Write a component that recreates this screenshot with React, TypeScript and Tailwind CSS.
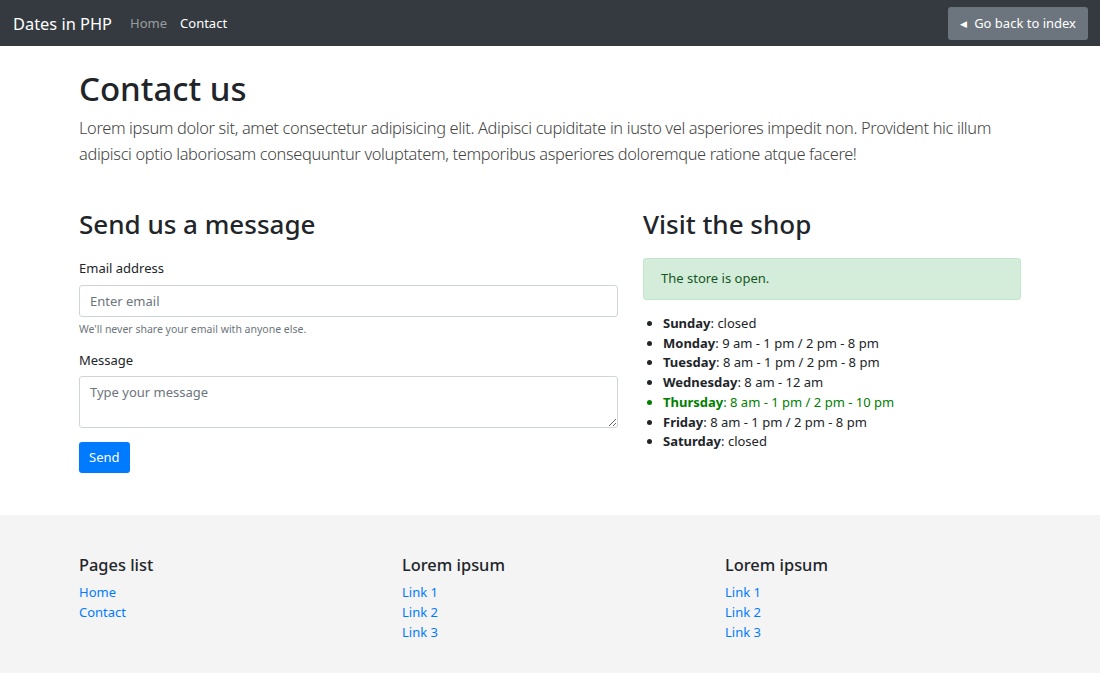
import { useState } from 'react'

const hours = [
    { day: 'Sunday', time: 'closed' },
    { day: 'Monday', time: '9 am - 1 pm / 2 pm - 8 pm' },
    { day: 'Tuesday', time: '8 am - 1 pm / 2 pm - 8 pm' },
    { day: 'Wednesday', time: '8 am - 12 am' },
    { day: 'Thursday', time: '8 am - 1 pm / 2 pm - 10 pm', today: true },
    { day: 'Friday', time: '8 am - 1 pm / 2 pm - 8 pm' },
    { day: 'Saturday', time: 'closed' },
]

const footerCols = [
    { title: 'Pages list', links: ['Home', 'Contact'] },
    { title: 'Lorem ipsum', links: ['Link 1', 'Link 2', 'Link 3'] },
    { title: 'Lorem ipsum', links: ['Link 1', 'Link 2', 'Link 3'] },
]

export default function App() {
    const [email, setEmail] = useState('')
    const [message, setMessage] = useState('')

    return (
        <div className="min-h-[673px] bg-white text-[13px] leading-[19.7px] text-[#212529] font-['Noto_Sans',sans-serif]">
            <nav className="flex h-[46px] items-center bg-[#343a40] pl-[13px] pr-[12px]">
                <a href="#" className="mr-[18px] pt-[1px] text-[16.4px] text-white">Dates in PHP</a>
                <a href="#" className="mr-[13px] pt-[1px] text-white/50">Home</a>
                <a href="#" className="pt-[1px] text-white">Contact</a>
                <button className="ml-auto flex h-[33px] items-center gap-[7px] rounded-[3px] bg-[#6c757d] px-[12px] pt-[1px] text-white">
                    <span className="text-[9px]">◀</span>
                    Go back to index
                </button>
            </nav>

            <main className="mx-auto w-[942px] pt-[23px] pb-[42px]">
                <h1 className="mb-[6px] text-[33px] font-medium leading-[40px]">Contact us</h1>
                <p className="text-[16.4px] font-light leading-[26px] tracking-[-0.35px] text-[#444]">
                    Lorem ipsum dolor sit, amet consectetur adipisicing elit. Adipisci cupiditate in iusto vel asperiores impedit non. Provident hic illum adipisci optio laboriosam consequuntur voluptatem, temporibus asperiores doloremque ratione atque facere!
                </p>

                <div className="mt-[41px] flex gap-[25px]">
                    <section className="w-[539px]">
                        <h2 className="mb-[19px] text-[26px] font-medium leading-[32px]">Send us a message</h2>
                        <div className="mb-[14px]">
                            <label className="mb-[6px] block">Email address</label>
                            <input
                                type="email"
                                value={email}
                                onChange={(e) => setEmail(e.target.value)}
                                placeholder="Enter email"
                                className="block h-[32px] w-full rounded-[3px] border border-[#ced4da] px-[10px] placeholder:text-[#6c757d] outline-none"
                            />
                            <small className="mt-[4px] block text-[10.5px] leading-[16px] text-[#6c757d]">We'll never share your email with anyone else.</small>
                        </div>
                        <div className="mb-[13px]">
                            <label className="mb-[6px] block">Message</label>
                            <textarea
                                rows={2}
                                value={message}
                                onChange={(e) => setMessage(e.target.value)}
                                placeholder="Type your message"
                                className="block h-[52px] w-full rounded-[3px] border border-[#ced4da] px-[10px] py-[6px] placeholder:text-[#6c757d] outline-none"
                            />
                        </div>
                        <button className="mt-[1px] h-[31px] rounded-[3px] bg-[#007bff] px-[10px] text-white">Send</button>
                    </section>

                    <section className="w-[378px]">
                        <h2 className="mb-[18px] text-[26px] font-medium leading-[32px]">Visit the shop</h2>
                        <div className="mb-[14px] rounded-[3px] border border-[#c3e6cb] bg-[#d4edda] px-[17px] py-[10px] text-[#155724]">
                            The store is open.
                        </div>
                        <ul className="list-disc pl-[20px]">
                            {hours.map((h) => (
                                <li key={h.day} className={h.today ? 'leading-[19.8px] text-[#008000]' : 'leading-[19.8px]'}>
                                    <b className="font-bold">{h.day}</b>: {h.time}
                                </li>
                            ))}
                        </ul>
                    </section>
                </div>
            </main>

            <footer className="bg-[#f4f4f4] pt-[40px] pb-[34px]">
                <div className="mx-auto grid w-[942px] grid-cols-[298px_298px_298px] gap-[25px]">
                    {footerCols.map((col, i) => (
                        <div key={i}>
                            <h5 className="mb-[7px] text-[16.4px] font-medium leading-[20px]">{col.title}</h5>
                            {col.links.map((l) => (
                                <a key={l} href="#" className="block leading-[20px] text-[#007bff]">{l}</a>
                            ))}
                        </div>
                    ))}
                </div>
            </footer>
        </div>
    )
}
